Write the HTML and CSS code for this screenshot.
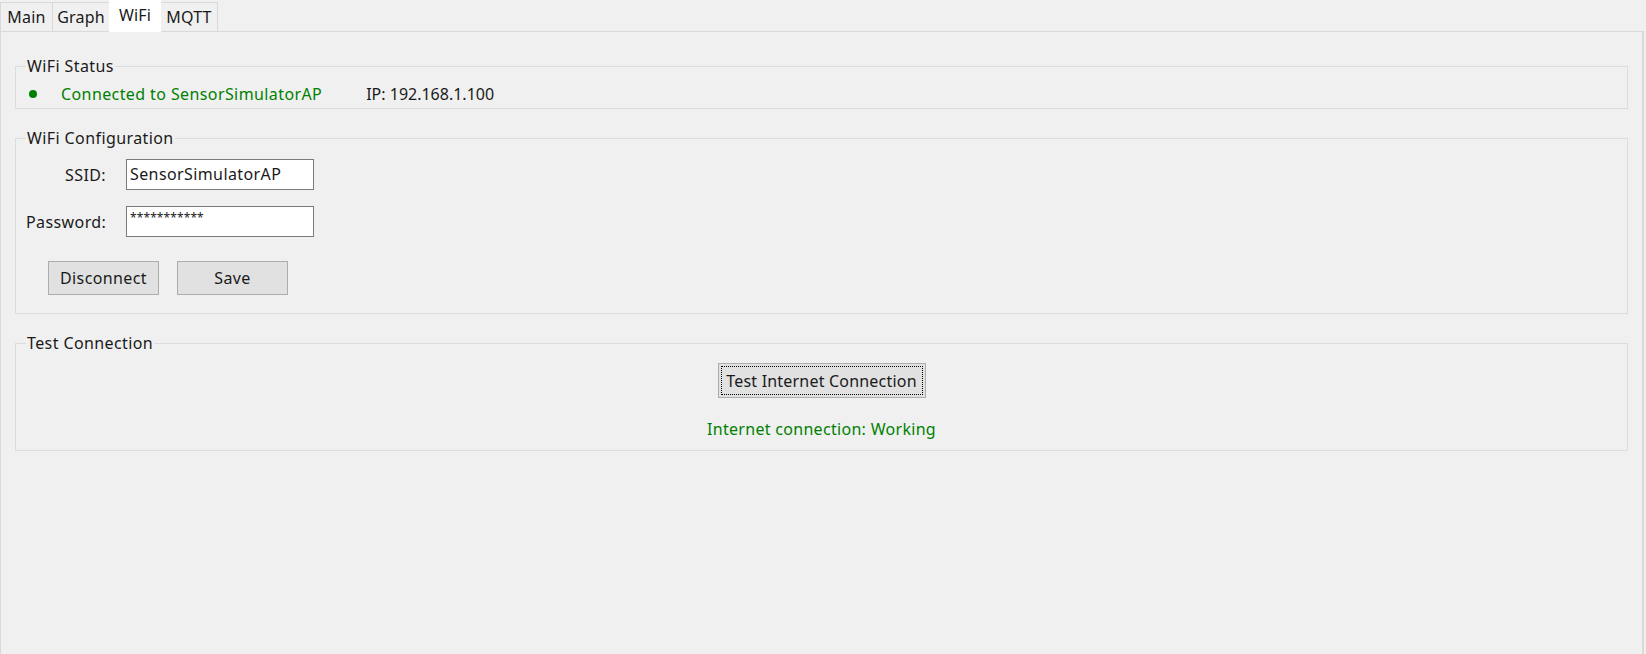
FILE: index.html
```html
<!DOCTYPE html>
<html>
<head>
<meta charset="utf-8">
<link rel="stylesheet" href="styles.css">
</head>
<body>
<div class="tabs">
  <div class="tab tab-main">Main</div>
  <div class="tab tab-graph">Graph</div>
  <div class="tab tab-wifi selected">WiFi</div>
  <div class="tab tab-mqtt">MQTT</div>
</div>
<div class="pane">
  <fieldset class="group group-status">
    <legend>WiFi Status</legend>
    <div class="status-row">
      <span class="dot"></span>
      <span class="connected">Connected to SensorSimulatorAP</span>
      <span class="ip">IP: 192.168.1.100</span>
    </div>
  </fieldset>
  <fieldset class="group group-config">
    <legend>WiFi Configuration</legend>
    <div class="form">
      <label class="lbl">SSID:</label>
      <div class="entry">SensorSimulatorAP</div>
      <label class="lbl">Password:</label>
      <div class="entry pw">***********</div>
    </div>
    <div class="buttons">
      <div class="btn">Disconnect</div>
      <div class="btn">Save</div>
    </div>
  </fieldset>
  <fieldset class="group group-test">
    <legend>Test Connection</legend>
    <div class="test-wrap">
      <div class="btn btn-test"><span class="focus">Test Internet Connection</span></div>
      <div class="result">Internet connection: Working</div>
    </div>
  </fieldset>
</div>
</body>
</html>
```

FILE: styles.css
```css
html, body {
  margin: 0;
  padding: 0;
  background: #f0f0f0;
  height: 100%;
  overflow: hidden;
}
body {
  font-family: "Noto Sans", "Open Sans", sans-serif;
  font-size: 16px;
  letter-spacing: 0.4px;
  color: #1a1a1a;
  width: 1644px;
}
.tabs {
  display: flex;
  align-items: flex-end;
  height: 31px;
  position: relative;
  z-index: 2;
}
.tab {
  box-sizing: border-box;
  height: 29px;
  border: 1px solid #d9d9d9;
  border-bottom: none;
  margin-right: -1px;
  line-height: 28px;
  text-align: center;
  background: #f0f0f0;
  letter-spacing: 0.2px;
}
.tab-main { width: 53px; }
.tab-graph { width: 58px; }
.tab-wifi { width: 52px; }
.tab-mqtt { width: 58px; }
.tab.selected {
  height: 32px;
  margin-bottom: -1px;
  background: #ffffff;
  border-color: #ffffff;
  line-height: 28px;
  position: relative;
  z-index: 3;
}
.pane {
  box-sizing: border-box;
  border: 1px solid #d9d9d9;
  border-right-width: 2px;
  height: 640px;
  padding: 14px 14px 0 14px;
  width: 1644px;
}
.group {
  margin: 0;
  border: 1px solid #dcdcdc;
  padding: 0 10px;
  min-width: 0;
}
.group legend {
  padding: 0 1px;
  margin-left: 0;
  line-height: 20px;
  height: 20px;
}
.group-status {
  margin-top: 10px;
  padding-bottom: 4px;
}
.status-row {
  display: flex;
  align-items: center;
  height: 20px;
  margin-top: 8px;
}
.dot {
  width: 8px;
  height: 8px;
  border-radius: 50%;
  background: #008000;
  margin-left: 3px;
  margin-right: 24px;
}
.connected { color: #008000; }
.ip { margin-left: 44px; letter-spacing: 0; }

.group-config {
  margin-top: 19px;
  padding-bottom: 18px;
}
.form {
  display: grid;
  grid-template-columns: 80px 188px;
  column-gap: 20px;
  row-gap: 16px;
  margin-top: 11px;
  align-items: center;
}
.lbl { text-align: right; }
.entry {
  box-sizing: border-box;
  height: 31px;
  background: #fff;
  border: 1px solid #7a7a7a;
  padding: 0 3px;
  line-height: 29px;
}
.entry.pw {
  font-size: 12px;
  letter-spacing: 0.1px;
  line-height: 22px;
}
.buttons {
  display: flex;
  gap: 18px;
  margin-top: 24px;
  margin-left: 22px;
}
.btn {
  box-sizing: border-box;
  width: 111px;
  height: 34px;
  background: #e1e1e1;
  border: 1px solid #adadad;
  text-align: center;
  line-height: 32px;
}
.group-test {
  margin-top: 19px;
  padding-bottom: 11px;
}
.test-wrap {
  display: flex;
  flex-direction: column;
  align-items: center;
  margin-top: 10px;
}
.btn.btn-test {
  width: 208px;
  height: 35px;
  padding: 2px;
  line-height: normal;
  letter-spacing: 0.2px;
}
.focus {
  display: block;
  height: 29px;
  line-height: 28px;
  box-sizing: border-box;
  border: 1px dotted #000;
}
.result {
  color: #008000;
  height: 20px;
  line-height: 20px;
  margin-top: 21px;
  letter-spacing: 0.3px;
}
```
